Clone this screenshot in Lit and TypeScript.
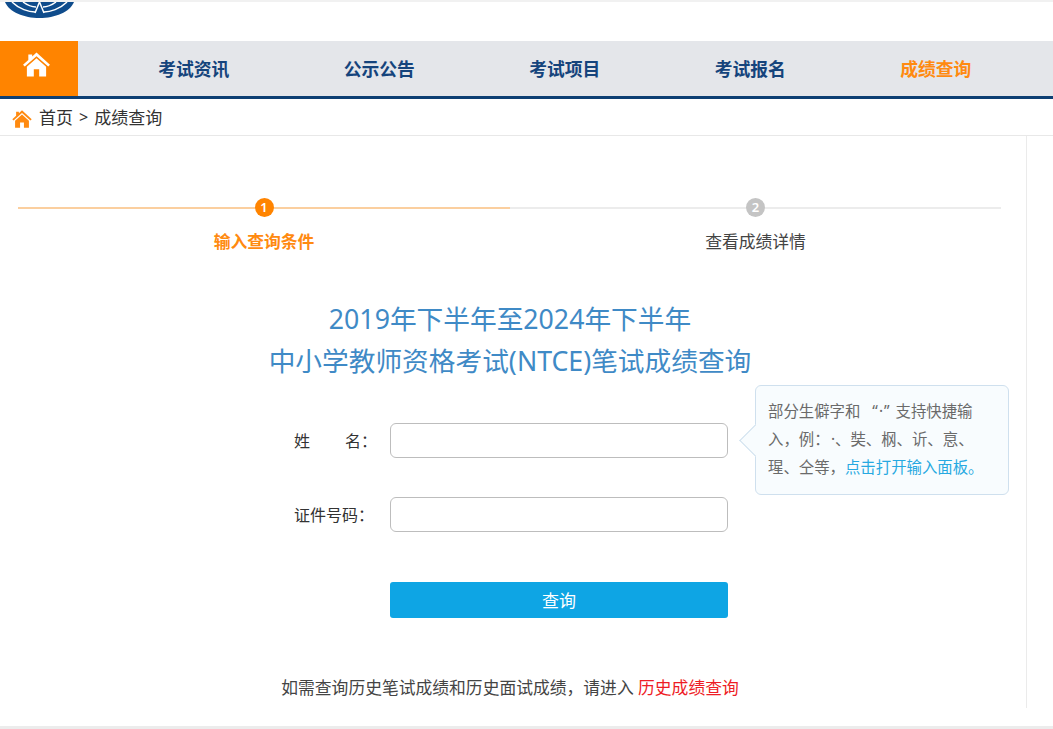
import { LitElement, html, css, svg } from "lit";
import { customElement } from "lit/decorators.js";

const house = (fill: string, w: number, h: number) => html`<svg width=${w} height=${h} viewBox="0 0 28 26" aria-hidden="true">
  ${svg`<path fill=${fill} d="M14 0.5 L9.500 4.600 V2.500 H5.500 V8.200 L0 13.200 L1.800 15.200 L14 4.400 L26.200 15.200 L28 13.200 Z"/>
  <path fill=${fill} d="M14 6.600 L24 15.400 V25.500 H16.800 V18 H11.200 V25.500 H4 V15.400 Z"/>`}
</svg>`;

@customElement("app-root")
export class AppRoot extends LitElement {
  static styles = css`
    :host { display: block; width: 1053px; height: 729px; overflow: hidden; background: #fff; position: relative;
      font-family: "Noto Sans", "Noto Sans CJK SC", sans-serif; color: #333; }
    .top { height: 41px; border-top: 2px solid #f1f1f1; box-sizing: border-box; overflow: hidden; padding-left: 5px; }
    .logo { display: block; }
    .nav { height: 58px; box-sizing: border-box; display: flex; background: #e4e6ea; border-bottom: 3px solid #0d3f73; }
    .home { width: 78px; height: 55px; background: #ff8400; display: flex; justify-content: center; padding: 11px 5px 0 0; box-sizing: border-box; }
    .items { display: flex; padding-left: 23px; }
    .item { width: 185.5px; text-align: center; font-size: 17.8px; font-weight: 700; line-height: 57px; color: #15447c; }
    .item.on { color: #ff8a10; }
    .crumb { height: 37px; box-sizing: border-box; border-bottom: 1px solid #e8e8e8; display: flex; align-items: center; padding: 0 0 1px 12px; font-size: 17px; color: #333; }
    .crumb svg { margin: 4px 7px 0 0; }
    .crumb .sep { margin: 0 6px; font-size: 16px; }
    .main { width: 1027px; height: 572px; box-sizing: border-box; border-right: 1px solid #ebebeb; padding: 60px 24px 0 18px; display: flex; flex-direction: column; position: relative; }
    .steps { display: grid; grid-template-columns: 492px 491px; }
    .step { display: flex; flex-direction: column; align-items: center; position: relative; font-size: 16.8px; line-height: 24px; color: #444; }
    .track { position: absolute; left: 0; right: 0; top: 11px; height: 2px; background: #ececec; }
    .on .track { background: #fbcf9f; }
    .dot { width: 19px; height: 19px; margin: 2px 0 0; border-radius: 50%; background: #c4c4c4; color: #fff; font-size: 13px; font-weight: 600; line-height: 19px; text-align: center; position: relative; }
    .on .dot { background: #ff8400; }
    .label { margin-top: 13px; }
    .on .label { color: #ff8a10; font-weight: 700; }
    .title { margin: 44px 0 0; text-align: center; font-size: 26.7px; line-height: 42px; font-weight: 400; color: #3f8ac6; }
    .row { display: flex; align-items: center; margin-top: 39px; height: 35px; padding-left: 276px; }
    .row.first { margin-top: 41px; }
    .lab { width: 96px; font-size: 16px; color: #333; display: flex; gap: 35px; white-space: nowrap; padding-bottom: 2px; box-sizing: border-box; }
    .box { width: 338px; height: 35px; box-sizing: border-box; border: 1px solid #bdbdbd; border-radius: 6px; background: #fff; }
    .btn { margin: 50px 0 0 372px; width: 338px; height: 36px; border-radius: 3px; background: #0ea5e4; color: #fff; font-size: 17px; line-height: 38px; text-align: center; }
    .foot { margin-top: 58px; text-align: center; font-size: 16.8px; line-height: 24px; color: #444; }
    .foot span { color: #ee1c25; }
    .tip { position: absolute; left: 755px; top: 249px; width: 254px; height: 110px; box-sizing: border-box; background: #f8fcfe; border: 1px solid #cfe0ee; border-radius: 6px; padding: 12px 12px 0; font-size: 15.4px; line-height: 28px; color: #6a6a6a; white-space: nowrap; }
    .tip::before { content: ""; position: absolute; left: -12px; top: 43px; width: 23px; height: 23px; box-sizing: border-box; background: #f8fcfe; border-left: 1px solid #cfe0ee; border-bottom: 1px solid #cfe0ee; transform: rotate(45deg); }
    .tip div { position: relative; }
    .tip a { color: #27a9e1; }
    .quote { margin: 0 5px 0 12px; letter-spacing: 1px; }
    .mid { margin-left: 9px; }
    .bottom { position: absolute; left: 0; right: 0; bottom: 0; height: 3px; background: #ececec; }
  `;

  render() {
    const items = ["考试资讯", "公示公告", "考试项目", "考试报名"];
    return html`
      <div class="top">
        <svg class="logo" width="70" height="17" viewBox="0 0 70 17" aria-hidden="true">
          <path fill="#0f4c8c" d="M0 0 H69 C65 10 50 16 34.500 16 C19 16 4 10 0 0 Z"/>
          <path fill="none" stroke="#fff" stroke-width="1.500" d="M7 0 C14 7 24 10 30 10 M62 0 C55 7 45 10 39 10 M18 0 C22 3 27 5 31 5 M51 0 C47 3 42 5 38 5"/>
          <path fill="none" stroke="#fff" stroke-width="1.500" d="M34.500 0 L30 11 M34.500 0 L39 11"/>
        </svg>
      </div>
      <div class="nav">
        <div class="home">${house("#fff", 27, 25)}</div>
        <div class="items">
          ${items.map((t) => html`<div class="item">${t}</div>`)}
          <div class="item on">成绩查询</div>
        </div>
      </div>
      <div class="crumb">${house("#ff8a10", 20, 18)}<span>首页</span><span class="sep">&gt;</span><span>成绩查询</span></div>
      <div class="main">
        <div class="steps">
          <div class="step on"><div class="track"></div><div class="dot">1</div><div class="label">输入查询条件</div></div>
          <div class="step"><div class="track"></div><div class="dot">2</div><div class="label">查看成绩详情</div></div>
        </div>
        <h1 class="title">2019年下半年至2024年下半年<br />中小学教师资格考试(NTCE)笔试成绩查询</h1>
        <div class="row first"><div class="lab"><span>姓</span><span>名：</span></div><div class="box"></div></div>
        <div class="row"><div class="lab"><span>证件号码：</span></div><div class="box"></div></div>
        <div class="btn">查询</div>
        <div class="foot">如需查询历史笔试成绩和历史面试成绩，请进入 <span>历史成绩查询</span></div>
        <div class="tip">
          <div>部分生僻字和<span class="quote">“·”</span>支持快捷输<br />入，例：<span class="mid">·</span>、奘、㭎、䜣、恴、<br />瑆、仝等，<a>点击打开输入面板。</a></div>
        </div>
      </div>
      <div class="bottom"></div>
    `;
  }
}
